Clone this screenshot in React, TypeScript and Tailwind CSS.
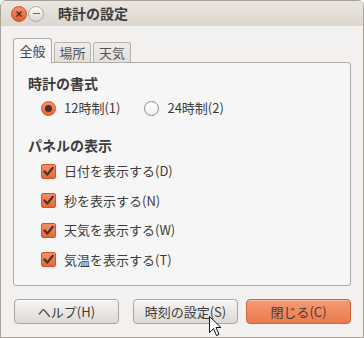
const font = { fontFamily: '"Noto Sans CJK JP", "Liberation Sans", sans-serif' };

function Radio({ checked }: { checked?: boolean }) {
  if (checked) {
    return (
      <span className="flex h-[15px] w-[15px] shrink-0 items-center justify-center rounded-full border border-[#c8572a] bg-gradient-to-b from-[#f39067] to-[#e4682f]">
        <span className="h-[7px] w-[7px] rounded-full bg-[#4b3028]" />
      </span>
    );
  }
  return <span className="block h-[15px] w-[15px] shrink-0 rounded-full border border-[#8e8a85] bg-gradient-to-b from-white to-[#f1f0ef]" />;
}

function Check() {
  return (
    <span className="flex h-[15px] w-[15px] items-center justify-center rounded-[2px] border border-[#c8572a] bg-gradient-to-b from-[#f39067] to-[#e4682f]">
      <svg width="11" height="11" viewBox="0 0 11 11">
        <path d="M1.5 5.5 L4.3 8.6 L9.8 1.8" fill="none" stroke="#4b3028" strokeWidth="2.2" strokeLinecap="round" strokeLinejoin="round" />
      </svg>
    </span>
  );
}

function CheckRow({ label }: { label: string }) {
  return (
    <div className="flex h-[20px] items-center gap-[8px] pl-[13px]">
      <Check />
      <span>{label}</span>
    </div>
  );
}

function Button({ label, primary }: { label: string; primary?: boolean }) {
  return (
    <div
      className={
        primary
          ? "flex h-[25px] w-[105px] items-center justify-center rounded-[4px] border border-[#c66a43] bg-gradient-to-b from-[#f59a75] to-[#ea7a4c] text-[#4b3a33] shadow-[inset_0_1px_0_rgba(255,255,255,0.35)]"
          : "flex h-[25px] w-[105px] items-center justify-center rounded-[4px] border border-[#a9a49e] bg-gradient-to-b from-[#f7f6f5] to-[#dcd9d5] shadow-[inset_0_1px_0_rgba(255,255,255,0.8)]"
      }
    >
      {label}
    </div>
  );
}

export default function App() {
  return (
    <div className="relative h-[338px] w-[364px] text-[13px] text-[#3c3c3c]" style={font}>
      <div className="flex h-full w-full flex-col overflow-hidden rounded-t-[6px] border border-[#a7a19a] bg-[#f2f1f0]">
        {/* title bar */}
        <div className="flex h-[25px] shrink-0 items-center bg-gradient-to-b from-[#ebe6e1] to-[#ddd5ce] pl-[10px]">
          <div className="flex h-[16px] w-[16px] items-center justify-center rounded-full border border-[#c8552a] bg-gradient-to-b from-[#f69066] to-[#e2592a]">
            <svg width="6" height="6" viewBox="0 0 6 6">
              <path d="M0.5 0.5 L5.5 5.5 M5.5 0.5 L0.5 5.5" stroke="#4a2a20" strokeWidth="1.3" />
            </svg>
          </div>
          <div className="ml-px flex h-[16px] w-[16px] items-center justify-center rounded-full border border-[#b2aba4] bg-gradient-to-b from-[#fbfaf9] to-[#dcd7d2]">
            <span className="h-px w-[7px] bg-[#6a625c]" />
          </div>
          <span className="ml-[14px] text-[14px] font-bold text-[#3c3c3c]">時計の設定</span>
        </div>

        {/* body */}
        <div className="flex flex-1 flex-col px-[12px] pt-[12px]">
          <div className="flex items-end gap-[2px] pl-0">
            <div className="relative z-10 -mb-px flex h-[25px] w-[39px] items-center justify-center rounded-t-[3px] border border-b-0 border-[#b0aba5] bg-[#f6f6f6]">
              全般
            </div>
            <div className="flex h-[20px] w-[37px] items-center justify-center rounded-t-[3px] border border-b-0 border-[#b8b3ad] bg-gradient-to-b from-[#eeedeb] to-[#e2dfdc] text-[#555]">
              場所
            </div>
            <div className="flex h-[20px] w-[38px] items-center justify-center rounded-t-[3px] border border-b-0 border-[#b8b3ad] bg-gradient-to-b from-[#eeedeb] to-[#e2dfdc] text-[#555]">
              天気
            </div>
          </div>

          <div className="flex h-[224px] flex-col rounded-[3px] rounded-tl-none border border-[#b0aba5] bg-[#f6f6f6] pl-[14px] pt-[10px]">
            <div className="flex h-[20px] items-center text-[14px] font-bold">時計の書式</div>
            <div className="mt-[5px] flex h-[20px] items-center pl-[13px]">
              <Radio checked />
              <span className="ml-[8px]">12時制(1)</span>
              <span className="ml-[24px] flex">
                <Radio />
              </span>
              <span className="ml-[8px]">24時制(2)</span>
            </div>
            <div className="mt-[17px] flex h-[20px] items-center text-[14px] font-bold">パネルの表示</div>
            <div className="mt-[6px] flex flex-col gap-[9.5px]">
              <CheckRow label="日付を表示する(D)" />
              <CheckRow label="秒を表示する(N)" />
              <CheckRow label="天気を表示する(W)" />
              <CheckRow label="気温を表示する(T)" />
            </div>
          </div>

          <div className="mt-[13px] flex items-center pl-px pr-0">
            <Button label="ヘルプ(H)" />
            <div className="ml-auto flex gap-[8px]">
              <Button label="時刻の設定(S)" />
              <Button label="閉じる(C)" primary />
            </div>
          </div>
        </div>
      </div>

      {/* mouse pointer */}
      <svg className="absolute left-[209px] top-[316px]" width="13" height="21" viewBox="0 0 13 21">
        <path d="M0.5 0.5 L0.5 16.5 L4.5 12.5 L7.5 19.5 L10 18.5 L7 11.5 L12 11.5 Z" fill="#fff" stroke="#111" strokeWidth="1" strokeLinejoin="round" />
      </svg>
    </div>
  );
}
